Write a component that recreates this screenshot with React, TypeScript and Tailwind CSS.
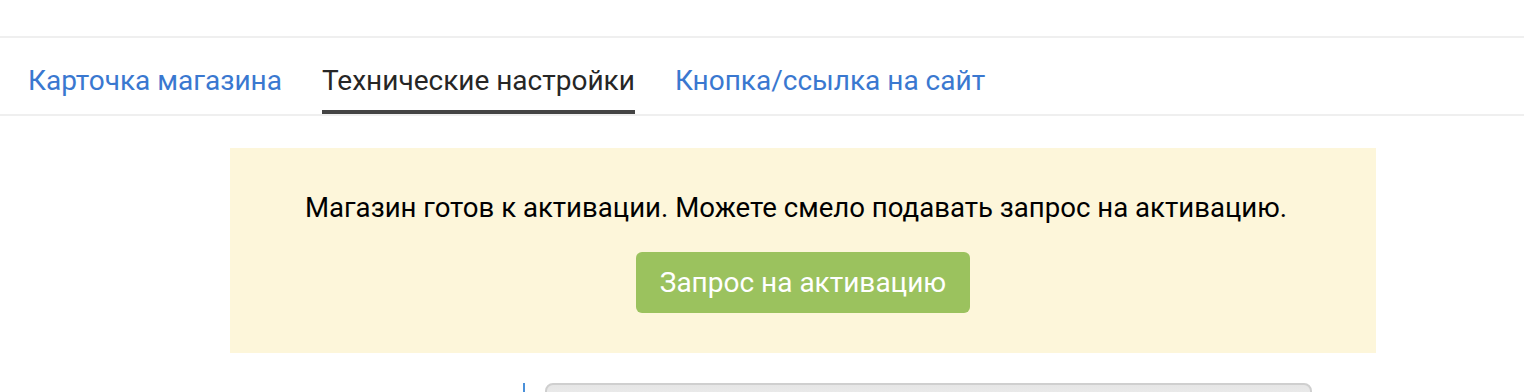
import { useState } from 'react'

const tabs = ['Карточка магазина', 'Технические настройки', 'Кнопка/ссылка на сайт']

export default function App() {
  const [active, setActive] = useState(1)

  return (
    <div className="w-[1524px] h-[392px] overflow-hidden bg-white font-['Roboto',sans-serif]">
      <div className="h-[36px]" />
      <nav className="flex gap-[40px] px-[28px] border-t-2 border-b-2 border-[#efefef] h-[80px]">
        {tabs.map((t, i) => (
          <button
            key={t}
            type="button"
            onClick={() => setActive(i)}
            className={
              i === active
                ? 'relative pt-[10px] text-[28px] leading-[34px] text-[#262626] text-left'
                : 'relative pt-[10px] text-[28px] leading-[34px] text-[#3a78d0] text-left'
            }
          >
            {t}
            {i === active && (
              <span className="absolute left-0 right-0 bottom-0 h-[4px] bg-[#444]" />
            )}
          </button>
        ))}
      </nav>

      <div className="pl-[230px] pt-[32px]">
        <div className="w-[1146px] h-[205px] bg-[#fdf6da] flex flex-col items-center pt-[45px]">
          <p className="mr-[14px] text-[27.6px] leading-[30px] text-black">
            Магазин готов к активации. Можете смело подавать запрос на активацию.
          </p>
          <button
            type="button"
            className="mt-[29px] w-[334px] h-[61px] rounded-[6px] bg-[#9bc25e] text-white text-[28px]"
          >
            Запрос на активацию
          </button>
        </div>
      </div>

      <div className="flex items-start mt-[30px] pl-[523px]">
        <div className="w-[2px] h-[20px] bg-[#4a90d9]" />
        <div className="ml-[20px] w-[767px] h-[40px] rounded-[8px] border-2 border-[#cfcfcf] bg-gradient-to-b from-[#e6e6e6] to-[#f5f5f5]" />
      </div>
    </div>
  )
}
